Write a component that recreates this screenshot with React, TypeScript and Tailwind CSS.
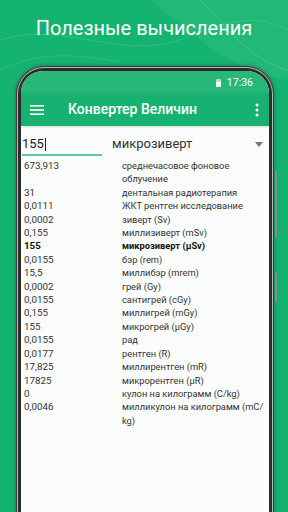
import React from "react";

const rows: [string, string, boolean?][] = [
	["673,913", "среднечасовое фоновое облучение"],
	["31", "дентальная радиотерапия"],
	["0,0111", "ЖКТ рентген исследование"],
	["0,0002", "зиверт (Sv)"],
	["0,155", "миллизиверт (mSv)"],
	["155", "микрозиверт (µSv)", true],
	["0,0155", "бэр (rem)"],
	["15,5", "миллибэр (mrem)"],
	["0,0002", "грей (Gy)"],
	["0,0155", "сантигрей (cGy)"],
	["0,155", "миллигрей (mGy)"],
	["155", "микрогрей (µGy)"],
	["0,0155", "рад"],
	["0,0177", "рентген (R)"],
	["17,825", "миллирентген (mR)"],
	["17825", "микрорентген (µR)"],
	["0", "кулон на килограмм (C/kg)"],
	["0,0046", "милликулон на килограмм (mC/\u200Bkg)"],
];

const App = () => {
	return (
		<div className="relative w-[288px] h-[512px] overflow-hidden bg-[#14b470] font-['Roboto','Liberation_Sans',sans-serif]">
			{/* soft waves in the backdrop */}
			<svg className="absolute inset-0" width="288" height="512" viewBox="0 0 288 512">
				<path d="M150 0 C200 40 230 70 288 80 L288 0 Z" fill="#ffffff" opacity="0.06" />
				<path d="M0 40 C60 20 120 60 180 40 C220 25 250 10 288 30" stroke="#ffffff" strokeWidth="1" fill="none" opacity="0.12" />
				<path d="M200 0 C230 30 250 60 288 70" stroke="#ffffff" strokeWidth="1" fill="none" opacity="0.15" />
				<path d="M0 70 C40 50 80 55 120 62" stroke="#ffffff" strokeWidth="1" fill="none" opacity="0.1" />
			</svg>

			<div className="relative flex flex-col">
				<h1 className="mt-[14px] text-center text-[20px] leading-[28px] text-white">
					Полезные вычисления
				</h1>

				<div className="relative ml-[16px] mt-[24px] w-[258px] h-[460px] rounded-t-[28px] bg-[#3c3c3c] p-[1px] shadow-[0_0_4px_rgba(0,0,0,0.35)]">
					<div className="h-full rounded-t-[27px] bg-[#b9b9b9] p-[1px]">
						<div className="h-full rounded-t-[26px] bg-[#2c2c2c] px-[3px] pt-[3px]">
							<div className="h-full rounded-t-[22px] overflow-hidden bg-[#fbfcfc] flex flex-col">
								{/* status bar */}
								<div className="h-[22px] bg-[#27b777] flex items-center justify-end gap-[6px] pr-[16px] pt-[2px]">
									<div className="w-[5px] h-[8px] rounded-[1px] bg-white/60 flex flex-col justify-end">
										<div className="h-[5px] bg-white rounded-b-[1px]" />
									</div>
									<span className="text-[10.5px] text-white leading-none">17:36</span>
								</div>

								{/* toolbar */}
								<div className="h-[33px] bg-[#17b271] flex items-center pl-[9px] pr-[10px] shadow-[0_1px_2px_rgba(0,0,0,0.15)]">
									<svg width="14" height="12" viewBox="0 0 14 12">
										<rect x="0" y="1" width="14" height="1.6" fill="white" />
										<rect x="0" y="5.2" width="14" height="1.6" fill="white" />
										<rect x="0" y="9.4" width="14" height="1.6" fill="white" />
									</svg>
									<span className="ml-[24px] text-[14px] font-medium text-white">Конвертер Величин</span>
									<svg className="ml-auto" width="4" height="14" viewBox="0 0 4 14">
										<circle cx="2" cy="2" r="1.5" fill="white" />
										<circle cx="2" cy="7" r="1.5" fill="white" />
										<circle cx="2" cy="12" r="1.5" fill="white" />
									</svg>
								</div>

								{/* input row */}
								<div className="mt-[10px] flex items-end pr-[6px]">
									<div className="ml-[1px] w-[80px] border-b-[2px] border-[#5fc89c] pb-[2px] flex items-center">
										<span className="text-[13px] leading-[16px] text-[#222]">155</span>
										<span className="ml-[1px] w-[1px] h-[13px] bg-[#222]" />
									</div>
									<span className="ml-[10px] pb-[4px] text-[13px] leading-[16px] text-[#333]">микрозиверт</span>
									<svg className="ml-auto mb-[9px]" width="8" height="5" viewBox="0 0 8 5">
										<path d="M0 0 L8 0 L4 5 Z" fill="#777" />
									</svg>
								</div>

								{/* results */}
								<div className="mt-[3px] flex flex-col pl-[3px] text-[9.3px] leading-[13.4px] text-[#333]">
									{rows.map(([val, unit, bold], i) => (
										<div key={i} className={`flex ${bold ? "font-bold text-[#111]" : ""}`}>
											<span className="w-[98px] shrink-0 text-[9.8px]">{val}</span>
											<span className="w-[144px]">{unit}</span>
										</div>
									))}
								</div>
							</div>
						</div>
					</div>
					{/* side buttons */}
					<div className="absolute right-[-3px] top-[105px] w-[2px] h-[66px] rounded-r-[1px] bg-[#8a8a8a]" />
					<div className="absolute right-[-3px] top-[206px] w-[2px] h-[30px] rounded-r-[1px] bg-[#8a8a8a]" />
				</div>
			</div>
		</div>
	);
};

export default App;
